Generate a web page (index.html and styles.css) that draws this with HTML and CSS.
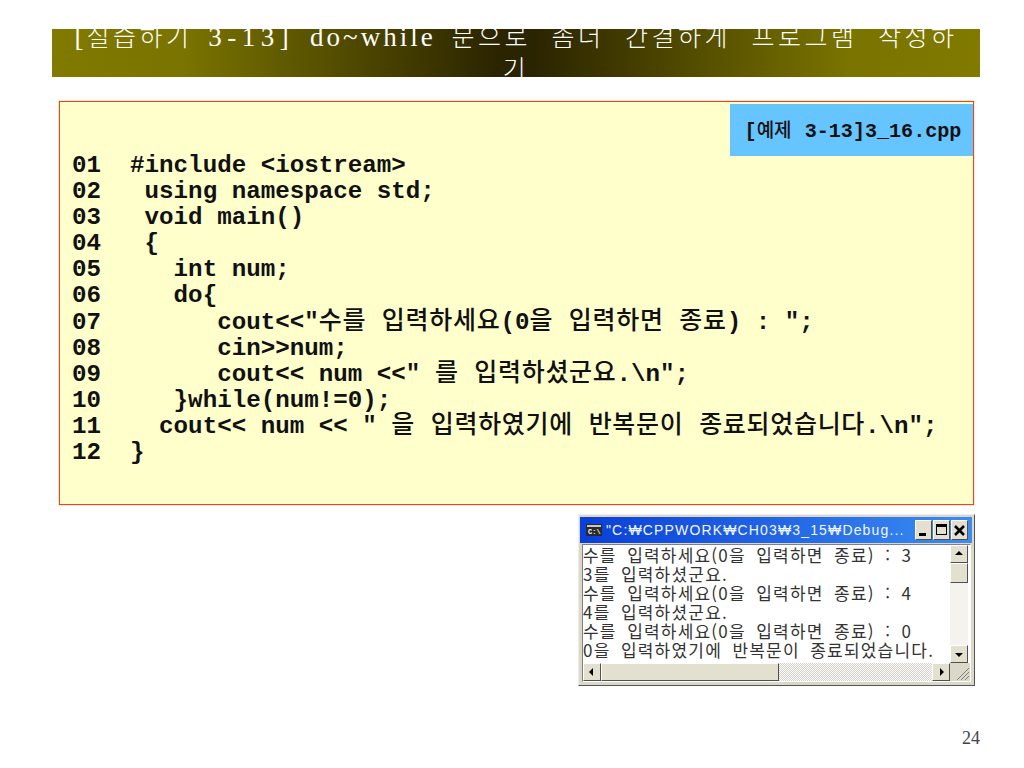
FILE: index.html
```html
<!DOCTYPE html>
<html lang="ko">
<head>
<meta charset="utf-8">
<title>실습하기 3-13</title>
<link rel="stylesheet" href="styles.css">
</head>
<body>
<main class="slide">
  <header class="title-bar"><h1 class="title">[<span class="title-ko">실습하기</span> <span class="title-num">3-13]</span> do~while <span class="title-ko">문으로 좀더 간결하게 프로그램 작성하기</span></h1></header>
  <section class="code-panel">
    <div class="badge"><span>[<span class="ko">예제</span> 3-13]3_16.cpp</span></div>
<pre class="code">01  #include &lt;iostream&gt;
02   using namespace std;
03   void main()
04   {
05     int num;
06     do{
07        cout&lt;&lt;"<span class="ko">수를 입력하세요</span>(0<span class="ko">을 입력하면 종료</span>) : ";
08        cin&gt;&gt;num;
09        cout&lt;&lt; num &lt;&lt;" <span class="ko">를 입력하셨군요</span>.\n";
10     }while(num!=0);
11    cout&lt;&lt; num &lt;&lt; " <span class="ko">을 입력하였기에 반복문이 종료되었습니다</span>.\n";
12  }</pre>
  </section>
  <div class="window-row">
    <div class="window">
      <div class="win-title">
        <svg class="win-icon" width="16" height="12" viewBox="0 0 16 12"><rect width="16" height="12" fill="#2a2a2a"/><rect x="1" y="1" width="14" height="2" fill="#c8c8c8"/><text x="2" y="10" font-size="7" font-weight="700" fill="#fff" font-family="Liberation Mono">C:\</text></svg>
        <span class="win-text">"C:₩CPPWORK₩CH03₩3_15₩Debug...</span>
        <span class="win-btns">
          <span class="win-btn"><svg width="15" height="18" viewBox="0 0 15 18"><rect x="3" y="12" width="7" height="3" fill="#000"/></svg></span>
          <span class="win-btn"><svg width="15" height="18" viewBox="0 0 15 18"><path d="M2 3h11v11H2zM3 6v7h9V6z" fill="#000" fill-rule="evenodd"/></svg></span>
          <span class="win-btn"><svg width="15" height="18" viewBox="0 0 15 18"><path d="M3 5l9 9M12 5l-9 9" stroke="#000" stroke-width="2.6"/></svg></span>
        </span>
      </div>
      <div class="win-body">
        <div class="win-main">
<pre class="console">수를 입력하세요(0을 입력하면 종료) : 3
3를 입력하셨군요.
수를 입력하세요(0을 입력하면 종료) : 4
4를 입력하셨군요.
수를 입력하세요(0을 입력하면 종료) : 0
0을 입력하였기에 반복문이 종료되었습니다.</pre>
          <div class="vscroll">
            <span class="sb-btn"><svg width="16" height="16" viewBox="0 0 16 16"><path d="M8 5l4 4H4z" fill="#000"/></svg></span>
            <span class="sb-thumb"></span>
            <span class="sb-vtrack"></span>
            <span class="sb-btn"><svg width="16" height="16" viewBox="0 0 16 16"><path d="M8 11L4 7h8z" fill="#000"/></svg></span>
          </div>
        </div>
        <div class="hscroll">
          <span class="sb-btn"><svg width="16" height="16" viewBox="0 0 16 16"><path d="M5 8l4-4v8z" fill="#000"/></svg></span>
          <span class="sb-hthumb"></span>
          <span class="sb-track"></span>
          <span class="sb-btn"><svg width="16" height="16" viewBox="0 0 16 16"><path d="M11 8L7 4v8z" fill="#000"/></svg></span>
          <span class="grip"><svg width="18" height="18" viewBox="0 0 18 18"><path d="M17 5L5 17M17 9l-8 8M17 13l-4 4" stroke="#808080" fill="none"/></svg></span>
        </div>
      </div>
    </div>
  </div>
  <footer class="page-no">24</footer>
</main>
</body>
</html>
```
FILE: styles.css
```css
* { box-sizing: border-box; }
html, body { margin: 0; padding: 0; background: #fff; }
.slide { width: 1024px; height: 768px; padding: 29px 44px 0 52px; display: flex; flex-direction: column; overflow: hidden; }
.title-bar { height: 48px; overflow: hidden; flex: none; background: linear-gradient(90deg, #807a00 0%, #7a7400 14%, #2b2400 48%, #2b2400 52%, #7a7400 86%, #807a00 100%); }
.title { margin: -8px 0 0; padding: 0 22px; text-align: center; color: #fff; font: 400 27px/32px "Liberation Serif", "Noto Sans CJK KR", serif; letter-spacing: 3px; word-spacing: 6px; }
.title-ko { font: 300 25px/1 "Noto Sans CJK KR", sans-serif; line-height: 0; letter-spacing: 3.5px; word-spacing: 10px; }
.title-num { letter-spacing: 5.5px; }
.code-panel { position: relative; flex: none; height: 404px; margin: 24px 6px 0 7px; padding: 51px 0 0 12px; background: #ffffcc; border: 1px solid #e64a19; box-shadow: 0 0 1px #e8552a; }
.badge { position: absolute; top: 2px; right: 0; width: 243px; height: 52px; padding: 2px 0 0 3px; background: #66c4ff; display: flex; align-items: center; justify-content: center; font: 700 20.1px "Liberation Mono", "Noto Sans CJK KR", monospace; color: #111; }
.badge .ko { font-family: "Noto Sans CJK KR", sans-serif; font-size: 19px; font-weight: 500; line-height: 0; margin-right: 1px; }
.code { margin: 0; font: 700 24.2px/26.1px "Liberation Mono", "Noto Sans CJK KR", monospace; color: #111; }
.code .ko { font-family: "Noto Sans CJK KR", sans-serif; font-weight: 500; font-size: 25px; line-height: 0; letter-spacing: .7px; word-spacing: 8px; }
.window-row { display: flex; justify-content: flex-end; margin: 9px 5px 0 0; flex: none; }
.window { width: 397px; height: 172px; padding: 2px 2px 3px 1px; background: #dcd8c8; border: 1px solid; border-color: #eeeeee #555555 #555555 #eeeeee; display: flex; flex-direction: column; }
.win-title { height: 26px; flex: none; display: flex; align-items: center; padding: 0 4px 0 6px; background: linear-gradient(90deg, #0a3fd8, #3a8cf2); color: #f2f6ff; }
.win-icon { flex: none; margin-right: 4px; }
.win-text { flex: 1; font: 400 14px "Liberation Sans", "Noto Sans CJK KR", sans-serif; letter-spacing: 1.15px; white-space: nowrap; overflow: hidden; }
.win-btns { display: flex; gap: 1px; flex: none; }
.win-btn { width: 17px; height: 20px; display: flex; align-items: center; justify-content: center; background: #e4e0d0; border: 1px solid; border-color: #fff #505050 #505050 #fff; }
.win-body { flex: 1; display: flex; flex-direction: column; min-height: 0; margin: 1px 1px 0 2px; border: 1px solid; border-color: #808080 #fff #fff #808080; }
.win-main { flex: 1; display: flex; min-height: 0; background: #fff; }
.console { flex: 1; margin: 0; padding: 0; font: 400 17px/19px "Noto Sans CJK KR", sans-serif; color: #333; overflow: hidden; word-spacing: 4.5px; letter-spacing: 1.2px; }
.vscroll { width: 18px; margin-right: 2px; flex: none; display: flex; flex-direction: column; background: #f4f3ee; }
.hscroll { height: 18px; flex: none; display: flex; background: #e8e6e0; }
.sb-btn { width: 18px; height: 18px; flex: none; display: flex; align-items: center; justify-content: center; background: #e4e0d0; border: 1px solid; border-color: #fff #505050 #505050 #fff; }
.sb-thumb { height: 20px; flex: none; background: #e4e0d0; border: 1px solid; border-color: #fff #505050 #505050 #fff; }
.sb-hthumb { width: 178px; flex: none; background: #e4e0d0; border: 1px solid; border-color: #fff #505050 #505050 #fff; }
.sb-vtrack { flex: 1; }
.sb-track { flex: 1; background: repeating-conic-gradient(#d4d0c8 0 25%, #fff 0 50%) 0 0 / 2px 2px; }
.grip { width: 20px; flex: none; background: #dcd8c8; display: flex; align-items: flex-end; justify-content: flex-end; }
.page-no { margin: 42px 0 0 0; text-align: right; font: 18px/20px "Liberation Serif", serif; color: #444; }
```
